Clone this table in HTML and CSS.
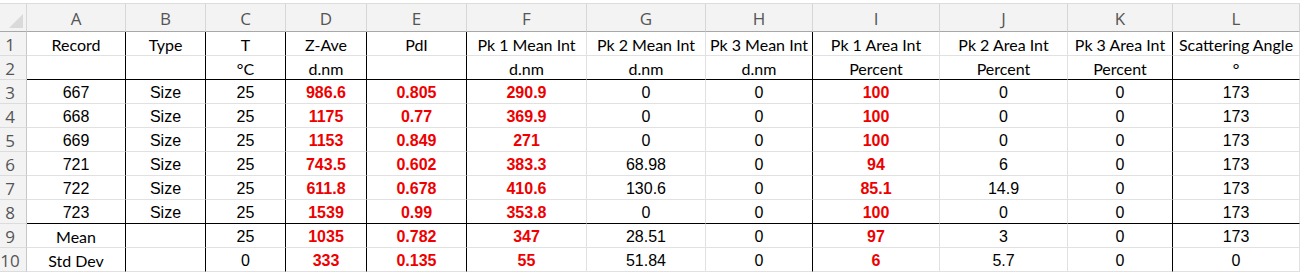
FILE: index.html
```html
<!DOCTYPE html>
<html>
<head>
<meta charset="utf-8">
<link rel="stylesheet" href="styles.css">
</head>
<body>
<div class="topstrip"></div>
<div class="sheet">
  <div class="row colhead">
    <div class="corner"><svg width="16" height="16" viewBox="0 0 16 16"><polygon points="15,1 15,15 1,15" fill="#dadada"/></svg></div>
    <div>A</div><div>B</div><div>C</div><div>D</div><div>E</div><div>F</div><div>G</div><div>H</div><div>I</div><div>J</div><div>K</div><div>L</div>
  </div>
  <div class="row data hdr">
    <div class="rn">1</div><div>Record</div><div>Type</div><div>T</div><div>Z-Ave</div><div>PdI</div><div>Pk 1 Mean Int</div><div>Pk 2 Mean Int</div><div>Pk 3 Mean Int</div><div>Pk 1 Area Int</div><div>Pk 2 Area Int</div><div>Pk 3 Area Int</div><div>Scattering Angle</div>
  </div>
  <div class="row data hdr sep">
    <div class="rn">2</div><div></div><div></div><div>°C</div><div>d.nm</div><div></div><div>d.nm</div><div>d.nm</div><div>d.nm</div><div>Percent</div><div>Percent</div><div>Percent</div><div>°</div>
  </div>
  <div class="row data vals">
    <div class="rn">3</div><div>667</div><div>Size</div><div>25</div><div>986.6</div><div>0.805</div><div>290.9</div><div>0</div><div>0</div><div>100</div><div>0</div><div>0</div><div>173</div>
  </div>
  <div class="row data vals">
    <div class="rn">4</div><div>668</div><div>Size</div><div>25</div><div>1175</div><div>0.77</div><div>369.9</div><div>0</div><div>0</div><div>100</div><div>0</div><div>0</div><div>173</div>
  </div>
  <div class="row data vals">
    <div class="rn">5</div><div>669</div><div>Size</div><div>25</div><div>1153</div><div>0.849</div><div>271</div><div>0</div><div>0</div><div>100</div><div>0</div><div>0</div><div>173</div>
  </div>
  <div class="row data vals">
    <div class="rn">6</div><div>721</div><div>Size</div><div>25</div><div>743.5</div><div>0.602</div><div>383.3</div><div>68.98</div><div>0</div><div>94</div><div>6</div><div>0</div><div>173</div>
  </div>
  <div class="row data vals">
    <div class="rn">7</div><div>722</div><div>Size</div><div>25</div><div>611.8</div><div>0.678</div><div>410.6</div><div>130.6</div><div>0</div><div>85.1</div><div>14.9</div><div>0</div><div>173</div>
  </div>
  <div class="row data vals sep">
    <div class="rn">8</div><div>723</div><div>Size</div><div>25</div><div>1539</div><div>0.99</div><div>353.8</div><div>0</div><div>0</div><div>100</div><div>0</div><div>0</div><div>173</div>
  </div>
  <div class="row data vals">
    <div class="rn">9</div><div class="lbl">Mean</div><div></div><div>25</div><div>1035</div><div>0.782</div><div>347</div><div>28.51</div><div>0</div><div>97</div><div>3</div><div>0</div><div>173</div>
  </div>
  <div class="row data vals">
    <div class="rn">10</div><div class="lbl">Std Dev</div><div></div><div>0</div><div>333</div><div>0.135</div><div>55</div><div>51.84</div><div>0</div><div>6</div><div>5.7</div><div>0</div><div>0</div>
  </div>
</div>
</body>
</html>
```

FILE: styles.css
```css
html, body {
  margin: 0;
  padding: 0;
  background: #ffffff;
  width: 1300px;
  height: 272px;
  overflow: hidden;
}
.topstrip {
  height: 3px;
  border-bottom: 1px solid #dcdcdc;
  background: #ffffff;
}
.sheet {
  display: flex;
  flex-direction: column;
}
.row {
  display: grid;
  grid-template-columns: 27px 99px 80px 80px 81px 100px 120px 119px 107px 127px 128px 105px 127px;
  height: 24px;
}
.row > div {
  box-sizing: border-box;
  border-right: 1px solid #e1e1e1;
  border-bottom: 1px solid #e1e1e1;
  display: flex;
  align-items: center;
  justify-content: center;
  white-space: nowrap;
  overflow: hidden;
}
.colhead {
  height: 28px;
  background: #f3f3f3;
}
.colhead > div {
  font-family: "Open Sans", "Noto Sans", sans-serif;
  font-size: 17px;
  color: #555555;
  border-right: 1px solid #d6d6d6;
  border-bottom: 1px solid #a8a8a8;
  padding-top: 2px;
}
.colhead > .corner {
  align-items: flex-end;
  justify-content: flex-end;
  padding: 0 2px 2px 0;
}
.data > .rn {
  background: #f3f3f3;
  border-right: 1px solid #c8c8c8;
  border-bottom: 1px solid #dcdcdc;
  font-family: "Open Sans", "Noto Sans", sans-serif;
  font-size: 17px;
  color: #555555;
  justify-content: center;
  padding-right: 6px;
  padding-top: 1px;
}
.data > div:nth-child(2),
.data > div:nth-child(3),
.data > div:nth-child(4),
.data > div:nth-child(5),
.data > div:nth-child(6),
.data > div:nth-child(9),
.data > div:nth-child(12) {
  border-right: 1px solid #000000;
}
.data.sep > div:not(.rn) {
  border-bottom: 1px solid #000000;
}
.hdr > div:not(.rn) {
  font-family: Lato, "Open Sans", sans-serif;
  font-size: 16px;
  color: #000000;
  padding-top: 1px;
}
.vals > div:not(.rn) {
  font-family: "Liberation Sans", Arial, sans-serif;
  font-size: 16px;
  color: #000000;
  padding-top: 2px;
}
.vals > div.lbl {
  font-family: Lato, "Open Sans", sans-serif;
}
.vals > div:nth-child(5),
.vals > div:nth-child(6),
.vals > div:nth-child(7),
.vals > div:nth-child(10) {
  color: #ee0000;
  font-weight: bold;
}
```
